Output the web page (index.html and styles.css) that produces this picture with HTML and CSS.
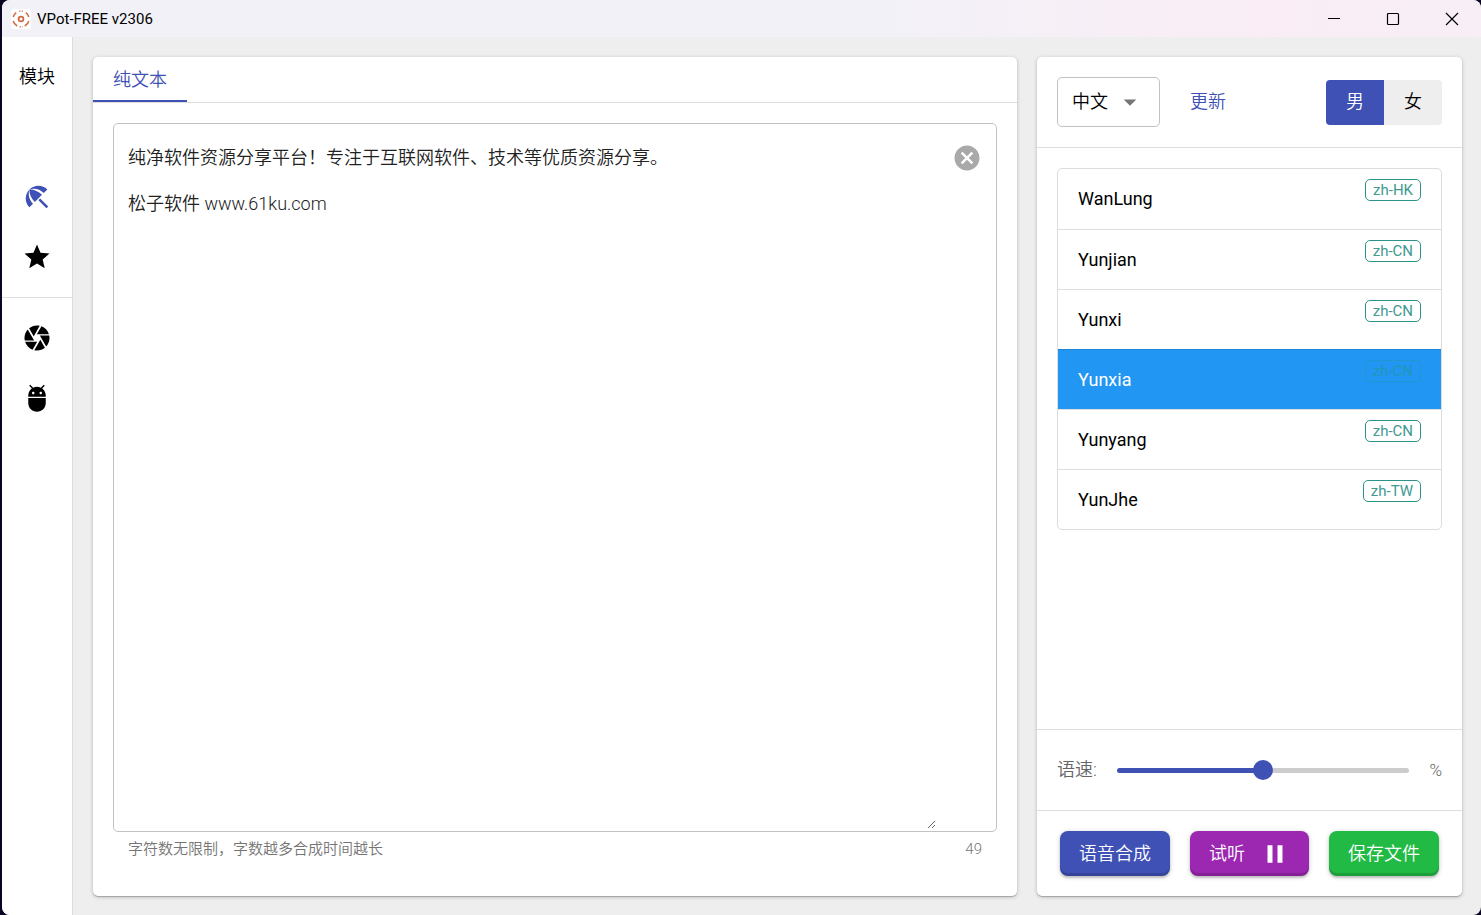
FILE: index.html
```html
<!DOCTYPE html>
<html lang="zh-CN">
<head>
<meta charset="utf-8">
<title>VPot-FREE v2306</title>
<link rel="stylesheet" href="styles.css">
</head>
<body>
<div class="window">
  <header class="titlebar">
    <svg class="logo" viewBox="0 0 20 20" aria-hidden="true">
      <rect width="20" height="20" rx="3" fill="#fff"/>
      <g fill="none" stroke="#cf6a42">
        <circle cx="10" cy="10" r="2.4" stroke-width="1.8"/>
        <path d="M5.2 3.6A8 8 0 0 0 2.2 8M14.8 3.6A8 8 0 0 1 17.8 8M2.2 12a8 8 0 0 0 4 5M17.8 12a8 8 0 0 1-4 5" stroke-width="1.5"/>
        <path d="M8 2.3a8 8 0 0 1 4 0M8.4 17.7a8 8 0 0 0 3.2 0" stroke-width="1.1" stroke-dasharray="1.5 1"/>
      </g>
    </svg>
    <h1 class="title">VPot-FREE v2306</h1>
    <div class="window-controls">
      <button class="window-button" type="button" aria-label="最小化"><svg viewBox="0 0 14 14"><path d="M1 6.5h12"/></svg></button>
      <button class="window-button" type="button" aria-label="最大化"><svg viewBox="0 0 14 14"><rect x="1.5" y="1.5" width="11" height="11" rx="1"/></svg></button>
      <button class="window-button" type="button" aria-label="关闭"><svg viewBox="0 0 14 14"><path d="M1 1l12 12M13 1L1 13"/></svg></button>
    </div>
  </header>
  <div class="body">
    <nav class="sidebar">
      <div class="sidebar-title">模块</div>
      <div class="nav-group">
        <button class="nav-button active" type="button" aria-label="文本"><svg class="icon" viewBox="0 0 24 24"><path d="M13.127 14.56l1.43-1.43 6.44 6.443L19.57 21zm4.293-5.73l2.86-2.86c-3.95-3.95-10.35-3.96-14.3-.02 3.93-1.3 8.31-.25 11.44 2.88zM5.95 5.98c-3.94 3.95-3.93 10.35.02 14.3l2.86-2.86C5.7 14.29 4.65 9.91 5.95 5.98zm.02-.02l-.01.01c-.38 3.01 1.17 6.88 4.3 10.02l5.73-5.73c-3.13-3.13-7.01-4.68-10.02-4.3z"/></svg></button>
        <button class="nav-button" type="button" aria-label="收藏"><svg class="icon" viewBox="0 0 24 24"><path d="M12 17.27L18.18 21l-1.64-7.03L22 9.24l-7.19-.61L12 2 9.19 8.63 2 9.24l5.46 4.73L5.82 21z"/></svg></button>
      </div>
      <div class="nav-group">
        <button class="nav-button" type="button" aria-label="相机"><svg class="icon" viewBox="0 0 24 24"><path d="M9.4 10.5l4.77-8.26C13.47 2.09 12.75 2 12 2c-2.4 0-4.6.85-6.32 2.25l3.66 6.35.06-.1zM21.54 9c-.92-2.92-3.15-5.26-6-6.34L11.88 9h9.66zm.26 1h-7.49l.29.5 4.76 8.25C21 16.97 22 14.61 22 12c0-.69-.07-1.35-.2-2zM8.54 12l-3.9-6.75C3.01 7.03 2 9.39 2 12c0 .69.07 1.35.2 2h7.49l-1.15-2zm-6.08 3c.92 2.92 3.15 5.26 6 6.34L12.12 15H2.46zm11.27 0l-3.9 6.76c.7.15 1.42.24 2.17.24 2.4 0 4.6-.85 6.32-2.25l-3.66-6.35-.93 1.6z"/></svg></button>
        <button class="nav-button" type="button" aria-label="调试"><svg class="icon" viewBox="0 0 24 24"><path d="M5 16c0 3.87 3.13 7 7 7s7-3.13 7-7v-4H5v4zM16.12 4.37l2.1-2.1-.82-.83-2.3 2.31C14.16 3.28 13.12 3 12 3s-2.16.28-3.09.75L6.6 1.44l-.82.83 2.1 2.1C6.14 5.64 5 7.68 5 10v1h14v-1c0-2.32-1.14-4.36-2.88-5.63zM9 9c-.55 0-1-.45-1-1s.45-1 1-1 1 .45 1 1-.45 1-1 1zm6 0c-.55 0-1-.45-1-1s.45-1 1-1 1 .45 1 1-.45 1-1 1z"/></svg></button>
      </div>
    </nav>
    <main class="content">
      <section class="card editor">
        <div class="tabs" role="tablist">
          <button class="tab" type="button" role="tab" aria-selected="true">纯文本</button>
        </div>
        <div class="editor-body">
          <div class="field">
            <textarea class="text-input" aria-label="纯文本" spellcheck="false">纯净软件资源分享平台！专注于互联网软件、技术等优质资源分享。

松子软件 www.61ku.com</textarea>
            <button class="clear-button" type="button" aria-label="清除"><svg class="icon" viewBox="0 0 24 24"><path d="M12 2C6.47 2 2 6.47 2 12s4.47 10 10 10 10-4.47 10-10S17.53 2 12 2zm5 13.59L15.59 17 12 13.41 8.41 17 7 15.59 10.59 12 7 8.41 8.41 7 12 10.59 15.59 7 17 8.41 13.41 12 17 15.59z"/></svg></button>
          </div>
          <div class="field-footer"><span>字符数无限制，字数越多合成时间越长</span><span>49</span></div>
        </div>
      </section>
      <section class="card voices">
        <div class="voice-header">
          <div class="select-box">
            <select class="select" aria-label="语言"><option>中文</option></select>
            <svg class="icon select-arrow" viewBox="0 0 24 24" aria-hidden="true"><path d="M7 10l5 5 5-5z"/></svg>
          </div>
          <button class="refresh" type="button">更新</button>
          <div class="toggle">
            <button class="toggle-button selected" type="button" aria-pressed="true">男</button>
            <button class="toggle-button" type="button" aria-pressed="false">女</button>
          </div>
        </div>
        <div class="voice-area">
          <ul class="voice-list">
            <li><button class="voice" type="button"><span>WanLung</span><span class="badge">zh-HK</span></button></li>
            <li><button class="voice" type="button"><span>Yunjian</span><span class="badge">zh-CN</span></button></li>
            <li><button class="voice" type="button"><span>Yunxi</span><span class="badge">zh-CN</span></button></li>
            <li><button class="voice current" type="button"><span>Yunxia</span><span class="badge">zh-CN</span></button></li>
            <li><button class="voice" type="button"><span>Yunyang</span><span class="badge">zh-CN</span></button></li>
            <li><button class="voice" type="button"><span>YunJhe</span><span class="badge">zh-TW</span></button></li>
          </ul>
        </div>
        <div class="speed">
          <label for="speed">语速:</label>
          <input class="slider" id="speed" type="range" min="-100" max="100" value="0">
          <span class="unit">%</span>
        </div>
        <div class="actions">
          <button class="action synth" type="button">语音合成</button>
          <button class="action listen" type="button">试听<svg class="icon" viewBox="0 0 24 24" aria-hidden="true"><path d="M6 19h4V5H6v14zm8-14v14h4V5h-4z"/></svg></button>
          <button class="action save" type="button">保存文件</button>
        </div>
      </section>
    </main>
  </div>
</div>
</body>
</html>
```
FILE: styles.css
```css
* { box-sizing: border-box; }

body {
  margin: 0;
  padding-left: 2px;
  background: #0b0524;
  color: #000;
  font: 350 18px/24px Roboto, "Noto Sans CJK SC", sans-serif;
}

button, select, textarea { font: inherit; color: inherit; }
button { padding: 0; border: 0; background: none; cursor: pointer; }

.icon { display: block; width: 30px; height: 30px; fill: currentColor; }

.window {
  display: flex;
  flex-direction: column;
  height: 100vh;
  overflow: hidden;
  border-radius: 8px;
  background: #eee;
}

.titlebar {
  display: flex;
  align-items: center;
  height: 37px;
  padding-left: 9px;
  background: linear-gradient(90deg, #f2f1f7 0%, #f3f1f8 60%, #faedf5 85%, #f7eef6 100%);
}
.logo { width: 20px; height: 20px; }
.title { margin: 0 0 0 6px; font-size: 15px; font-weight: 400; line-height: 20px; }
.window-controls { display: flex; margin-left: auto; }
.window-button { display: grid; place-items: center; width: 59px; height: 37px; }
.window-button svg { width: 14px; height: 14px; fill: none; stroke: #000; stroke-width: 1.2; }

.body { display: flex; flex: 1; min-height: 0; }

.sidebar { width: 71px; border-right: 1px solid #ddd; background: #fff; }
.sidebar-title { padding: 28px 0 38px; text-align: center; }
.nav-group { padding: 40px 0 10px; }
.nav-group + .nav-group { padding-top: 10px; border-top: 1px solid #ddd; }
.nav-button { display: grid; place-items: center; width: 100%; height: 60px; }
.nav-button.active { color: #3f51b5; }

.content {
  display: grid;
  grid-template-columns: minmax(0, 1fr) 425px;
  gap: 20px;
  flex: 1;
  padding: 20px 19px 19px 20px;
}
.card {
  display: flex;
  flex-direction: column;
  min-height: 0;
  border-radius: 5px;
  background: #fff;
  box-shadow: 0 1px 4px rgba(0, 0, 0, .2), 0 1px 1px rgba(0, 0, 0, .22);
}

.tabs { display: flex; border-bottom: 1px solid #ddd; }
.tab { height: 45px; padding: 2px 20px 0; border-bottom: 2px solid #3f51b5; color: #3f51b5; }

.editor-body { display: flex; flex: 1; flex-direction: column; padding: 20px 20px 30px; }
.field {
  display: flex;
  flex: 1;
  padding: 0 14px;
  border: 1px solid #c2c2c2;
  border-radius: 5px;
}
.text-input {
  flex: 1;
  margin-bottom: 2px;
  padding: 22px 0 0;
  border: 0;
  outline: 0;
  background: none;
  color: #212121;
  line-height: 23px;
  resize: both;
}
.clear-button { align-self: flex-start; margin: 19px 0 0 16px; color: #a9a9a9; }
.field-footer {
  display: flex;
  justify-content: space-between;
  padding: 5px 15px;
  color: #757575;
  font-size: 15px;
}

.voice-header { display: flex; align-items: center; padding: 20px; border-bottom: 1px solid #ddd; }
.select-box { display: grid; align-items: center; width: 103px; }
.select, .select-arrow { grid-area: 1 / 1; }
.select {
  width: 100%;
  height: 50px;
  padding: 0 14px;
  border: 1px solid #c2c2c2;
  border-radius: 5px;
  background: #fff;
  appearance: none;
}
.select-arrow { justify-self: end; margin-right: 15px; color: #757575; pointer-events: none; }
.refresh { margin-left: 30px; color: #3f51b5; }
.toggle { display: flex; margin-left: auto; overflow: hidden; border-radius: 4px; }
.toggle-button { height: 45px; padding: 0 20px; background: #eee; }
.toggle-button.selected { background: #3f51b5; color: #fff; }

.voice-area { flex: 1; min-height: 0; padding: 20px; }
.voice-list {
  margin: 0;
  padding: 0;
  overflow: hidden;
  border: 1px solid #ddd;
  border-radius: 5px;
  list-style: none;
  font-weight: 400;
}
.voice {
  display: flex;
  align-items: center;
  justify-content: space-between;
  width: 100%;
  height: 60px;
  padding: 0 20px;
}
li + li .voice { border-top: 1px solid #ddd; }
.voice.current, li + li .voice.current { border-color: #1d84d6; background: #2196f3; color: #fff; }
.badge {
  align-self: flex-start;
  margin-top: 10px;
  padding: 0 7px;
  border: 1px solid #2d9287;
  border-radius: 5px;
  color: #409a90;
  font-size: 15px;
  line-height: 20px;
}
.current .badge { border-color: #2196cf; color: #2196b8; }

.speed {
  display: flex;
  align-items: center;
  gap: 20px;
  height: 81px;
  padding: 0 20px;
  border-top: 1px solid #ddd;
  color: #666;
}
.unit { font-size: 17px; }
.slider { flex: 1; min-width: 0; height: 20px; margin: 0; background: none; appearance: none; }
.slider::-webkit-slider-runnable-track {
  height: 5px;
  border-radius: 3px;
  background: linear-gradient(90deg, #3f51b5 50%, #ccc 50%);
}
.slider::-webkit-slider-thumb {
  width: 20px;
  height: 20px;
  margin-top: -8px;
  border-radius: 50%;
  background: #3f51b5;
  appearance: none;
}

.actions {
  display: flex;
  justify-content: center;
  gap: 20px;
  padding: 20px;
  border-top: 1px solid #ddd;
}
.action {
  display: flex;
  align-items: center;
  gap: 15px;
  height: 45px;
  padding: 0 19px;
  border-radius: 8px;
  color: #fff;
  box-shadow: inset 0 -3px 0 rgba(0, 0, 0, .15), 0 1px 5px rgba(0, 0, 0, .2), 0 2px 2px rgba(0, 0, 0, .14);
}
.synth { background: #3f51b5; }
.listen { background: #9c27b0; }
.save { background: #21ba45; }
```
